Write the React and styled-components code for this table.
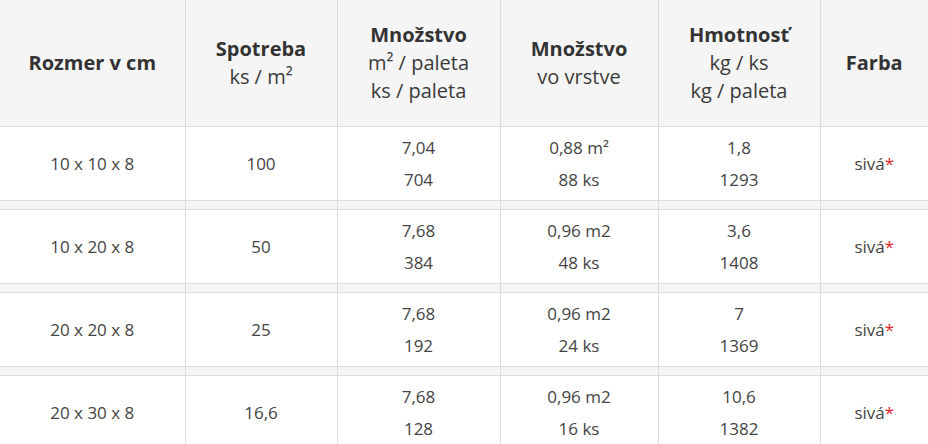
import React from 'react';
import styled, { createGlobalStyle } from 'styled-components';

const GlobalStyle = createGlobalStyle`
  html, body {
    margin: 0;
    padding: 0;
    background: #fff;
    font-family: "Open Sans", "Liberation Sans", Arial, sans-serif;
  }
`;

const Table = styled.table`
  width: 928px;
  border-collapse: collapse;
  table-layout: fixed;
  color: #444;
`;

const HeadCell = styled.th`
  background: #f5f5f5;
  border: 1px solid #dcdcdc;
  border-top: none;
  padding: 21px 4px;
  height: 84px;
  font-size: 20px;
  line-height: 28px;
  font-weight: 400;
  color: #3a3a3a;
  text-align: center;
  vertical-align: middle;

  &:first-child { border-left: none; }
  &:last-child { border-right: none; }
`;

const Title = styled.div`
  font-weight: 700;
  color: #333;
`;

const Cell = styled.td`
  border: 1px solid #dcdcdc;
  padding: 4px 6px;
  height: 65px;
  font-size: 17px;
  line-height: 32px;
  text-align: center;
  vertical-align: middle;

  &:first-child { border-left: none; }
  &:last-child { border-right: none; }
`;

const GapCell = styled.td`
  background: #f5f5f5;
  border: 1px solid #dcdcdc;
  height: 8px;
  padding: 0;

  &:first-child { border-left: none; }
  &:last-child { border-right: none; }
`;

const Star = styled.span`
  color: #e3262c;
`;

const columns = [185, 152, 163, 158, 162, 108];

const rows = [
  { size: '10 x 10 x 8', use: '100', qty: ['7,04', '704'], layer: ['0,88 m²', '88 ks'], weight: ['1,8', '1293'] },
  { size: '10 x 20 x 8', use: '50', qty: ['7,68', '384'], layer: ['0,96 m2', '48 ks'], weight: ['3,6', '1408'] },
  { size: '20 x 20 x 8', use: '25', qty: ['7,68', '192'], layer: ['0,96 m2', '24 ks'], weight: ['7', '1369'] },
  { size: '20 x 30 x 8', use: '16,6', qty: ['7,68', '128'], layer: ['0,96 m2', '16 ks'], weight: ['10,6', '1382'] },
];

const Lines = ({ items }) => items.map((t) => <div key={t}>{t}</div>);

export default function App() {
  return (
    <>
      <GlobalStyle />
      <Table>
        <colgroup>
          {columns.map((w, i) => <col key={i} style={{ width: w }} />)}
        </colgroup>
        <thead>
          <tr>
            <HeadCell><Title>Rozmer v cm</Title></HeadCell>
            <HeadCell><Title>Spotreba</Title>ks / m²</HeadCell>
            <HeadCell><Title>Množstvo</Title>m² / paleta<br />ks / paleta</HeadCell>
            <HeadCell><Title>Množstvo</Title>vo vrstve</HeadCell>
            <HeadCell><Title>Hmotnosť</Title>kg / ks<br />kg / paleta</HeadCell>
            <HeadCell><Title>Farba</Title></HeadCell>
          </tr>
        </thead>
        <tbody>
          {rows.map((r, i) => (
            <React.Fragment key={r.size}>
              {i > 0 && (
                <tr>
                  {columns.map((_, j) => <GapCell key={j} />)}
                </tr>
              )}
              <tr>
                <Cell>{r.size}</Cell>
                <Cell>{r.use}</Cell>
                <Cell><Lines items={r.qty} /></Cell>
                <Cell><Lines items={r.layer} /></Cell>
                <Cell><Lines items={r.weight} /></Cell>
                <Cell>sivá<Star>*</Star></Cell>
              </tr>
            </React.Fragment>
          ))}
        </tbody>
      </Table>
    </>
  );
}
